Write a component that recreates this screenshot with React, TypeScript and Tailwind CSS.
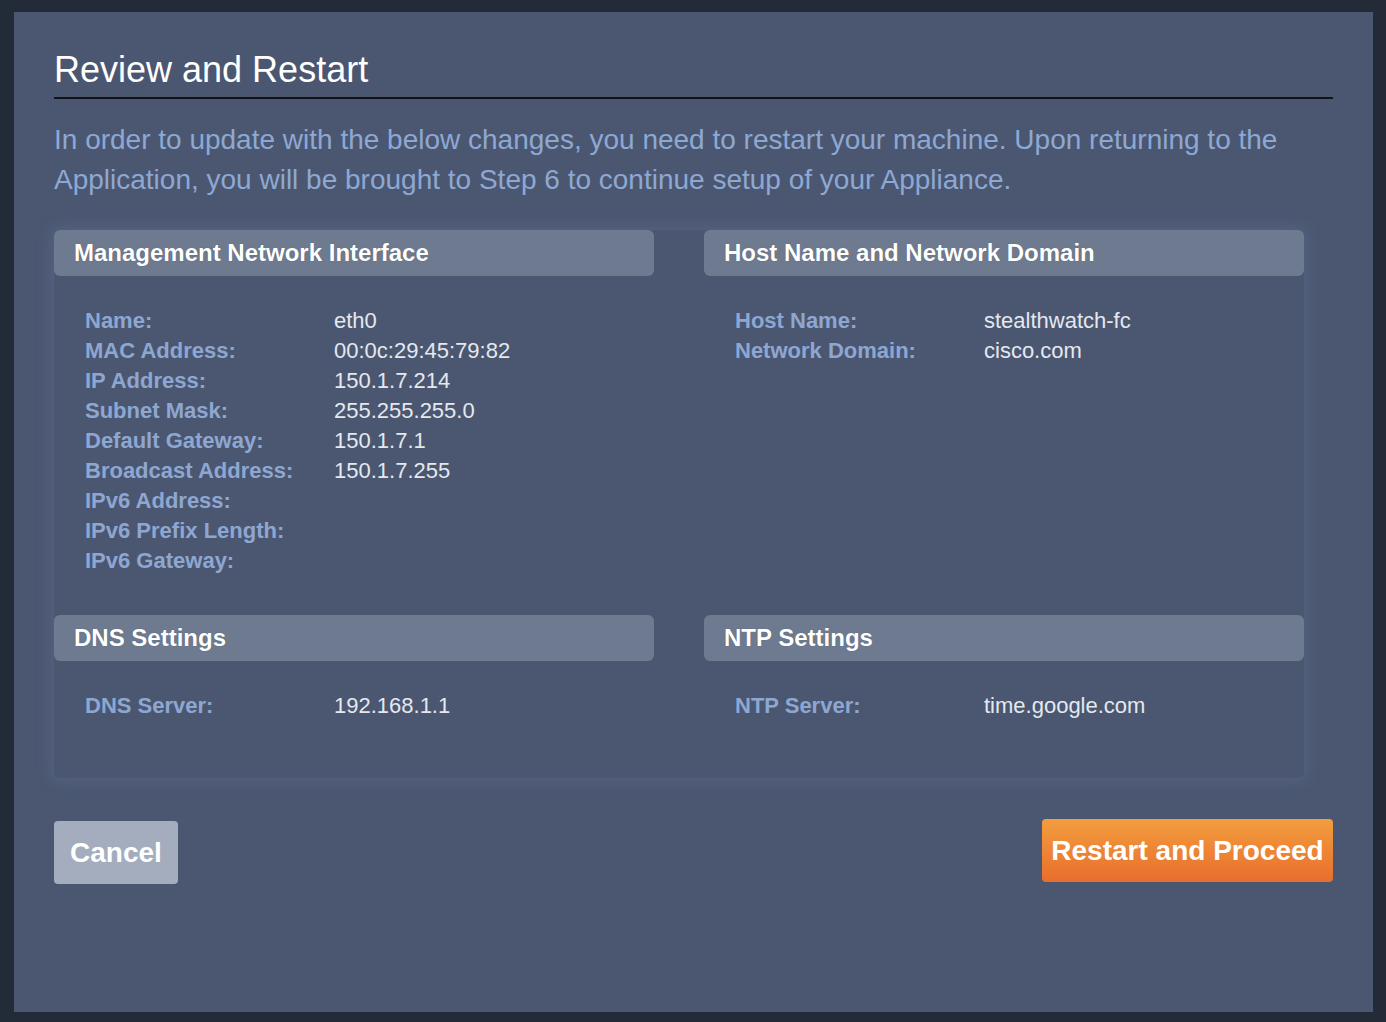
import React from "react";

const mgmtRows = [
  ["Name:", "eth0"],
  ["MAC Address:", "00:0c:29:45:79:82"],
  ["IP Address:", "150.1.7.214"],
  ["Subnet Mask:", "255.255.255.0"],
  ["Default Gateway:", "150.1.7.1"],
  ["Broadcast Address:", "150.1.7.255"],
  ["IPv6 Address:", ""],
  ["IPv6 Prefix Length:", ""],
  ["IPv6 Gateway:", ""],
];

const hostRows = [
  ["Host Name:", "stealthwatch-fc"],
  ["Network Domain:", "cisco.com"],
];

function Section({
  title,
  rows,
  pb,
}: {
  title: string;
  rows: string[][];
  pb: string;
}) {
  return (
    <div>
      <div className="h-[46px] rounded-[6px] bg-[#6e7a8f] pl-[20px] flex items-center text-[24px] font-bold text-white [text-shadow:0_0_1px_rgba(0,0,0,0.3)]">
        {title}
      </div>
      <div className={`pl-[31px] pt-[29px] ${pb}`}>
        {rows.map(([label, value]) => (
          <div key={label} className="flex h-[30px] items-center text-[22px]">
            <span className="w-[249px] shrink-0 font-bold text-[#8ea7d2]">
              {label}
            </span>
            <span className="text-[#e4e8ef]">{value}</span>
          </div>
        ))}
      </div>
    </div>
  );
}

export default function App() {
  return (
    <div
      className="min-h-screen bg-[#232a38] pt-[12px] pl-[14px]"
      style={{ fontFamily: '"Liberation Sans", Arial, sans-serif' }}
    >
      <div className="w-[1359px] h-[1000px] bg-[#4b5770] px-[40px] pt-[37px]">
        <h1 className="text-[36px] leading-[41px] text-white pb-[7px] border-b-2 border-[#111318]">
          Review and Restart
        </h1>
        <p className="mt-[21px] text-[28px] leading-[40px] text-[#8ea8d4]">
          In order to update with the below changes, you need to restart your
          machine. Upon returning to the Application, you will be brought to
          Step 6 to continue setup of your Appliance.
        </p>

        <div className="mt-[30px] w-[1250px] rounded-[6px] shadow-[0_0_14px_4px_rgba(100,120,160,0.35)] grid grid-cols-2 gap-x-[50px]">
          <Section
            title="Management Network Interface"
            rows={mgmtRows}
            pb="pb-[40px]"
          />
          <Section
            title="Host Name and Network Domain"
            rows={hostRows}
            pb="pb-[40px]"
          />
          <Section
            title="DNS Settings"
            rows={[["DNS Server:", "192.168.1.1"]]}
            pb="pb-[58px]"
          />
          <Section
            title="NTP Settings"
            rows={[["NTP Server:", "time.google.com"]]}
            pb="pb-[58px]"
          />
        </div>

        <div className="mt-[41px] flex items-start justify-between">
          <button className="mt-[2px] h-[63px] w-[124px] rounded-[4px] bg-[#a3adbe] text-[28px] font-bold text-white">
            Cancel
          </button>
          <button className="h-[63px] w-[291px] rounded-[4px] bg-gradient-to-b from-[#f29d3e] to-[#e86d2d] text-[28px] font-bold text-white">
            Restart and Proceed
          </button>
        </div>
      </div>
    </div>
  );
}
